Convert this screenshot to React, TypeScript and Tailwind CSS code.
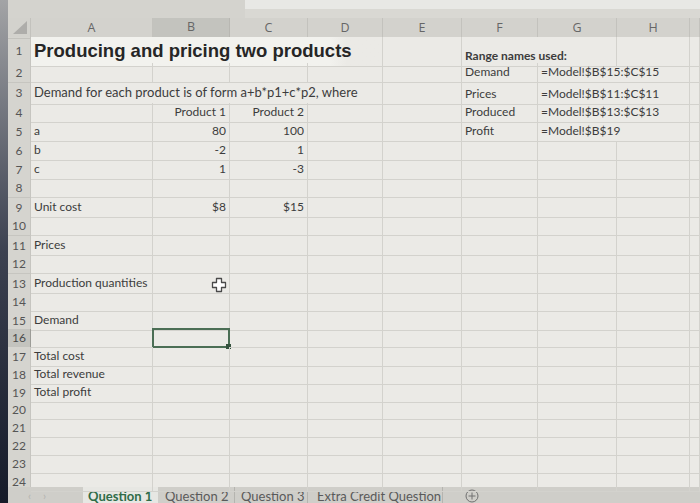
import React from 'react';

type Cell = { t: string; right?: boolean; bold?: boolean; span?: number; cls?: string };
type Row = { n: number; h: string; cells: Record<number, Cell> };

const COLS = ['A', 'B', 'C', 'D', 'E', 'F', 'G', 'H', ''];
const spanCls: Record<number, string> = { 1: '', 2: 'col-span-2', 4: 'col-span-4' };
const gridCols = 'grid grid-cols-[23px_122px_77px_78px_75px_79px_76px_79px_73px_1fr]';

const rows: Row[] = [
  {
    n: 1,
    h: 'h-[26px]',
    cells: {
      0: { t: 'Producing and pricing two products', span: 4, cls: "font-['Liberation_Sans',sans-serif] font-bold text-[18.5px] text-[#262626] bg-linear-to-r from-[#f2f2ee] from-85% to-[#ebeae6] to-90% items-center pb-0" },
      5: { t: 'Range names used:', span: 2, bold: true, cls: 'pb-0' },
    },
  },
  { n: 2, h: 'h-[20px]', cells: { 5: { t: 'Demand', cls: 'pb-0' }, 6: { t: '=Model!$B$15:$C$15', span: 2, cls: 'pb-0' } } },
  {
    n: 3,
    h: 'h-[20px]',
    cells: {
      0: { t: 'Demand for each product is of form a+b*p1+c*p2, where', span: 4, cls: 'text-[13px]' },
      5: { t: 'Prices', cls: 'pb-0' },
      6: { t: '=Model!$B$11:$C$11', span: 2, cls: 'pb-0' },
    },
  },
  {
    n: 4,
    h: 'h-[19px]',
    cells: {
      1: { t: 'Product 1', right: true },
      2: { t: 'Product 2', right: true },
      5: { t: 'Produced', cls: 'pb-0' },
      6: { t: '=Model!$B$13:$C$13', span: 2, cls: 'pb-0' },
    },
  },
  {
    n: 5,
    h: 'h-[19px]',
    cells: { 0: { t: 'a' }, 1: { t: '80', right: true }, 2: { t: '100', right: true }, 5: { t: 'Profit', cls: 'pb-0' }, 6: { t: '=Model!$B$19', span: 2, cls: 'pb-0' } },
  },
  { n: 6, h: 'h-[19px]', cells: { 0: { t: 'b' }, 1: { t: '-2', right: true }, 2: { t: '1', right: true } } },
  { n: 7, h: 'h-[19px]', cells: { 0: { t: 'c' }, 1: { t: '1', right: true }, 2: { t: '-3', right: true } } },
  { n: 8, h: 'h-[19px]', cells: {} },
  { n: 9, h: 'h-[19px]', cells: { 0: { t: 'Unit cost' }, 1: { t: '$8', right: true }, 2: { t: '$15', right: true } } },
  { n: 10, h: 'h-[19px]', cells: {} },
  { n: 11, h: 'h-[19px]', cells: { 0: { t: 'Prices' } } },
  { n: 12, h: 'h-[19px]', cells: {} },
  { n: 13, h: 'h-[19px]', cells: { 0: { t: 'Production quantities' } } },
  { n: 14, h: 'h-[18px]', cells: {} },
  { n: 15, h: 'h-[18px]', cells: { 0: { t: 'Demand' } } },
  { n: 16, h: 'h-[18px]', cells: {} },
  { n: 17, h: 'h-[18px]', cells: { 0: { t: 'Total cost' } } },
  { n: 18, h: 'h-[18px]', cells: { 0: { t: 'Total revenue' } } },
  { n: 19, h: 'h-[18px]', cells: { 0: { t: 'Total profit' } } },
  { n: 20, h: 'h-[18px]', cells: {} },
  { n: 21, h: 'h-[18px]', cells: {} },
  { n: 22, h: 'h-[18px]', cells: {} },
  { n: 23, h: 'h-[18px]', cells: {} },
  { n: 24, h: 'h-[14px]', cells: {} },
];

function PlusCursor() {
  return (
    <svg width="16" height="16" viewBox="0 0 16 16" className="absolute right-[2px] top-[3px]">
      <path
        d="M5.5 1.5h5v4h4v5h-4v4h-5v-4h-4v-5h4z"
        fill="#ffffff"
        stroke="#4a4a4a"
        strokeWidth="1.3"
        strokeLinejoin="round"
      />
    </svg>
  );
}

function SheetRow({ row }: { row: Row }) {
  const out: React.ReactNode[] = [];
  let c = 0;
  while (c < 9) {
    const cell = row.cells[c];
    const span = cell?.span ?? 1;
    const selected = row.n === 16 && c === 1;
    out.push(
      <div
        key={c}
        className={`relative flex items-end pb-[1px] px-[3px] border-r border-b border-[#d3d2cd] whitespace-nowrap overflow-visible text-[12px] text-[#3c3c3c] ${
          spanCls[span]
        } ${cell?.right ? 'justify-end' : 'justify-start'} ${cell?.bold ? 'font-bold' : ''} ${cell?.cls ?? ''}`}
      >
        {cell?.t}
        {row.n === 13 && c === 1 && <PlusCursor />}
        {selected && (
          <div className="absolute -left-[1px] -top-[1px] -right-[1px] -bottom-[1px] border-2 border-[#4b6e55]">
            <div className="absolute -right-[3px] -bottom-[3px] w-[5px] h-[5px] bg-[#35523e]" />
          </div>
        )}
      </div>,
    );
    c += span;
  }
  return (
    <div className={`${gridCols} ${row.h}`}>
      <div
        className={`flex items-center justify-center text-[12px] border-b border-r ${
          row.n === 16 ? 'bg-[#c3c3be] border-[#9c9c97] text-[#4a4a4a]' : 'bg-[#d5d4cf] border-[#c6c5c0] text-[#555]'
        }`}
      >
        {row.n}
      </div>
      {out}
      <div className="border-b border-[#d3d2cd]" />
    </div>
  );
}

export default function App() {
  return (
    <div className="w-[700px] h-[503px] overflow-hidden flex bg-[#d6d5d0] font-['Lato','Open_Sans',sans-serif]">
      <div className="w-[8px] shrink-0 bg-linear-to-b from-[#a3a4a6] via-[#3c4150] to-[#161b29]" />
      <div className="flex-1 flex flex-col min-w-0">
        <div className="h-[18px] shrink-0 flex">
          <div className="w-[237px] bg-[#d4d3ce]" />
          <div className="flex-1 flex flex-col">
            <div className="h-[9px] bg-[#e8e8e5]" />
            <div className="flex-1 bg-[#d9d8d3]" />
          </div>
        </div>

        <div className={`${gridCols} h-[19px] shrink-0 bg-[#d3d2cd] text-[12.5px] text-[#666] font-['Open_Sans',sans-serif]`}>
          <div className="relative border-b border-r border-[#c3c2bd]">
            <svg width="18" height="15" viewBox="0 0 18 15" className="absolute left-[2px] top-[2px]">
              <polygon points="17,1 17,14 3,14" fill="#aeadaa" />
            </svg>
          </div>
          {COLS.map((l, i) => (
            <div
              key={i}
              className={`flex items-center justify-center border-r ${
                i === 1 ? 'bg-[#c3c3be] border-b-2 border-b-[#8e9b92] border-r-[#b8b7b2]' : 'border-b border-[#c3c2bd]'
              }`}
            >
              {l}
            </div>
          ))}
        </div>

        <div className="flex-1 flex flex-col bg-[#ebeae6] min-h-0">
          {rows.map((r) => (
            <SheetRow key={r.n} row={r} />
          ))}
        </div>

        <div className="h-[16px] shrink-0 flex bg-[#cfcec9] text-[13px] text-[#5a5a5a] leading-[15px]">
          <div className="w-[75px] flex items-start gap-[12px] pl-[20px] pt-[1px] text-[#b3b3ae] text-[11px]">
            <span>‹</span>
            <span>›</span>
          </div>
          <div className="w-[75px] bg-[#e7e7e3] pl-[5px] pt-[2px] font-bold text-[#2f6c48]">Question 1</div>
          <div className="w-[77px] pl-[7px] pt-[2px] border-r border-[#b5b4af]">Question 2</div>
          <div className="w-[73px] pl-[6px] pt-[2px] border-r border-[#b5b4af]">Question 3</div>
          <div className="w-[135px] pl-[9px] pt-[2px] border-r border-[#b5b4af]">Extra Credit Question</div>
          <div className="pl-[22px] pt-[2px]">
            <svg width="14" height="14" viewBox="0 0 14 14">
              <circle cx="7" cy="7" r="6" fill="none" stroke="#707070" strokeWidth="1" />
              <path d="M7 3.5v7M3.5 7h7" stroke="#707070" strokeWidth="1" />
            </svg>
          </div>
        </div>
      </div>
    </div>
  );
}
